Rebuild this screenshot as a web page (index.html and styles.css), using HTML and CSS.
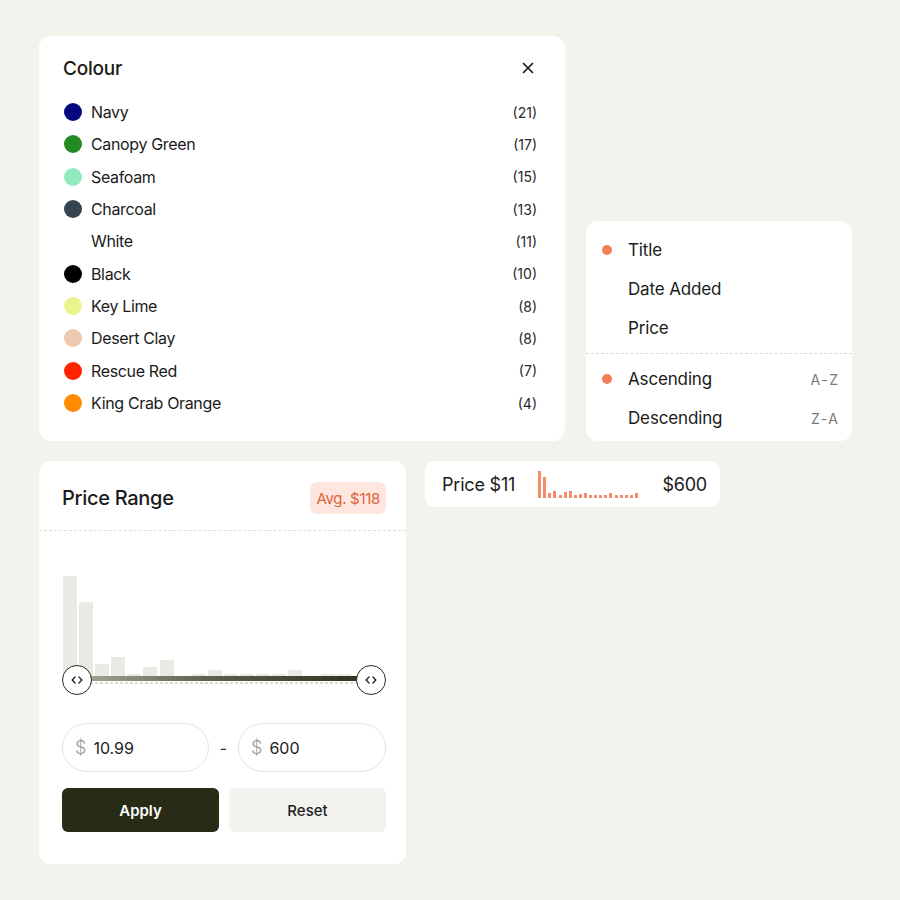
FILE: index.html
```html
<!DOCTYPE html>
<html lang="en">
<head>
<meta charset="utf-8">
<title>Filters</title>
<link rel="stylesheet" href="styles.css">
</head>
<body>
<main class="page">
  <div class="row row-top">
    <section class="card colour-card">
      <header class="colour-head">
        <h2 class="colour-title">Colour</h2>
        <button class="close" aria-label="Close">
          <svg width="12" height="12" viewBox="0 0 12 12"><path d="M1.5 1.5 L10.5 10.5 M10.5 1.5 L1.5 10.5" stroke="#1a1a1a" stroke-width="1.7" stroke-linecap="round"/></svg>
        </button>
      </header>
      <ul class="colour-list">
        <li class="colour-item"><span class="swatch" style="background:#06067f"></span><span class="colour-name">Navy</span><span class="count">(21)</span></li>
        <li class="colour-item"><span class="swatch" style="background:#228b22"></span><span class="colour-name">Canopy Green</span><span class="count">(17)</span></li>
        <li class="colour-item"><span class="swatch" style="background:#93e9be"></span><span class="colour-name">Seafoam</span><span class="count">(15)</span></li>
        <li class="colour-item"><span class="swatch" style="background:#36454f"></span><span class="colour-name">Charcoal</span><span class="count">(13)</span></li>
        <li class="colour-item"><span class="swatch" style="background:#ffffff"></span><span class="colour-name">White</span><span class="count">(11)</span></li>
        <li class="colour-item"><span class="swatch" style="background:#000000"></span><span class="colour-name">Black</span><span class="count">(10)</span></li>
        <li class="colour-item"><span class="swatch" style="background:#e8f48c"></span><span class="colour-name">Key Lime</span><span class="count">(8)</span></li>
        <li class="colour-item"><span class="swatch" style="background:#edc9af"></span><span class="colour-name">Desert Clay</span><span class="count">(8)</span></li>
        <li class="colour-item"><span class="swatch" style="background:#ff2400"></span><span class="colour-name">Rescue Red</span><span class="count">(7)</span></li>
        <li class="colour-item"><span class="swatch" style="background:#ff8c00"></span><span class="colour-name">King Crab Orange</span><span class="count">(4)</span></li>
      </ul>
    </section>

    <section class="card sort-card">
      <ul class="sort-list">
        <li class="sort-item"><span class="sort-dot on"></span><span class="sort-label">Title</span></li>
        <li class="sort-item"><span class="sort-dot"></span><span class="sort-label">Date Added</span></li>
        <li class="sort-item"><span class="sort-dot"></span><span class="sort-label">Price</span></li>
      </ul>
      <div class="sort-divider"></div>
      <ul class="sort-list">
        <li class="sort-item"><span class="sort-dot on"></span><span class="sort-label">Ascending</span><span class="sort-key">A-Z</span></li>
        <li class="sort-item"><span class="sort-dot"></span><span class="sort-label">Descending</span><span class="sort-key">Z-A</span></li>
      </ul>
    </section>
  </div>

  <div class="row row-bottom">
    <section class="card price-card">
      <header class="price-head">
        <h2 class="price-title">Price Range</h2>
        <span class="badge">Avg. $118</span>
      </header>
      <div class="price-body">
        <div class="chart">
          <div class="bars">
            <span class="bar" style="height:100px"></span>
            <span class="bar" style="height:74px"></span>
            <span class="bar" style="height:12px"></span>
            <span class="bar" style="height:19px"></span>
            <span class="bar" style="height:2px"></span>
            <span class="bar" style="height:9px"></span>
            <span class="bar" style="height:16px"></span>
            <span class="bar" style="height:0px"></span>
            <span class="bar" style="height:2px"></span>
            <span class="bar" style="height:6px"></span>
            <span class="bar" style="height:2px"></span>
            <span class="bar" style="height:2px"></span>
            <span class="bar" style="height:2px"></span>
            <span class="bar" style="height:2px"></span>
            <span class="bar" style="height:6px"></span>
            <span class="bar" style="height:0px"></span>
            <span class="bar" style="height:2px"></span>
            <span class="bar" style="height:2px"></span>
          </div>
          <div class="track"></div>
          <div class="dashes"></div>
          <span class="thumb thumb-left"><svg width="12" height="8" viewBox="0 0 12 8"><path d="M4 1 L1.2 4 L4 7 M8 1 L10.8 4 L8 7" fill="none" stroke="#1f2216" stroke-width="1.3" stroke-linecap="round" stroke-linejoin="round"/></svg></span>
          <span class="thumb thumb-right"><svg width="12" height="8" viewBox="0 0 12 8"><path d="M4 1 L1.2 4 L4 7 M8 1 L10.8 4 L8 7" fill="none" stroke="#1f2216" stroke-width="1.3" stroke-linecap="round" stroke-linejoin="round"/></svg></span>
        </div>
        <div class="inputs">
          <label class="field"><span class="cur">$</span><span class="val">10.99</span></label>
          <span class="sep">-</span>
          <label class="field"><span class="cur">$</span><span class="val">600</span></label>
        </div>
        <div class="actions">
          <button class="btn btn-apply">Apply</button>
          <button class="btn btn-reset">Reset</button>
        </div>
      </div>
    </section>

    <section class="card pill">
      <span class="pill-label">Price $11</span>
      <div class="mini">
        <span class="mbar" style="height:27px"></span>
        <span class="mbar" style="height:21px"></span>
        <span class="mbar" style="height:5px"></span>
        <span class="mbar" style="height:7px"></span>
        <span class="mbar" style="height:3px"></span>
        <span class="mbar" style="height:6px"></span>
        <span class="mbar" style="height:7px"></span>
        <span class="mbar" style="height:3px"></span>
        <span class="mbar" style="height:4px"></span>
        <span class="mbar" style="height:5px"></span>
        <span class="mbar" style="height:3px"></span>
        <span class="mbar" style="height:3px"></span>
        <span class="mbar" style="height:3px"></span>
        <span class="mbar" style="height:3px"></span>
        <span class="mbar" style="height:5px"></span>
        <span class="mbar" style="height:3px"></span>
        <span class="mbar" style="height:3px"></span>
        <span class="mbar" style="height:3px"></span>
        <span class="mbar" style="height:3px"></span>
        <span class="mbar" style="height:5px"></span>
      </div>
      <span class="pill-max">$600</span>
    </section>
  </div>
</main>
</body>
</html>
```
FILE: styles.css
```css
* { box-sizing: border-box; }
html, body { margin: 0; padding: 0; }
body {
  background: #f3f3ee;
  font-family: Inter, "Noto Sans", "Liberation Sans", sans-serif;
  color: #1b1b1b;
  width: 900px;
  height: 900px;
}
ul { list-style: none; margin: 0; padding: 0; }
h2 { margin: 0; }
button { font-family: inherit; border: 0; cursor: pointer; }

.page {
  padding: 36px 0 0 39px;
  display: flex;
  flex-direction: column;
  gap: 20px;
}
.row { display: flex; }
.row-top { align-items: flex-end; gap: 21px; }
.row-bottom { align-items: flex-start; gap: 19px; }

.card {
  background: #ffffff;
  border-radius: 12px;
}

/* Colour card */
.colour-card {
  width: 526px;
  height: 405px;
  padding: 20px 28px 0 24px;
}
.colour-head {
  display: flex;
  align-items: center;
  justify-content: space-between;
  height: 24px;
  margin-bottom: 16px;
}
.colour-title {
  font-size: 19px;
  font-weight: 550;
  letter-spacing: -0.2px;
  color: #1a1c12;
}
.close {
  background: none;
  padding: 0;
  width: 12px;
  height: 12px;
  margin-right: 3px;
  display: flex;
}
.colour-item {
  display: flex;
  align-items: center;
  height: 32.33px;
}
.swatch {
  width: 18px;
  height: 18px;
  border-radius: 50%;
  margin-left: 1px;
  margin-right: 9px;
  flex: none;
}
.colour-name {
  font-size: 16px;
  flex: 1;
  letter-spacing: -0.35px;
}
.count {
  font-size: 14px;
  color: #2a2a2a;
}

/* Sort card */
.sort-card {
  width: 266px;
  height: 220px;
  padding: 9.5px 0 4.5px;
}
.sort-item {
  display: flex;
  align-items: center;
  height: 39px;
  padding: 0 14px 0 16px;
}
.sort-dot {
  width: 10px;
  height: 10px;
  border-radius: 50%;
  margin-right: 16px;
  flex: none;
}
.sort-dot.on { background: #f08058; }
.sort-label {
  font-size: 17px;
  flex: 1;
  letter-spacing: -0.15px;
}
.sort-key {
  font-size: 14px;
  color: #7a7a7a;
  letter-spacing: 1.5px;
  margin-right: -1.5px;
}
.sort-divider {
  margin: 5.5px 0;
  border-top: 1px dashed #dcdcdc;
  height: 0;
}

/* Price card */
.price-card {
  width: 367px;
  height: 403px;
}
.price-head {
  display: flex;
  align-items: center;
  justify-content: space-between;
  padding: 21px 20px 16px 23px;
  border-bottom: 1px dashed #dedede;
}
.price-title {
  font-size: 20px;
  font-weight: 500;
  letter-spacing: -0.3px;
}
.badge {
  height: 32px;
  padding: 0 6px;
  display: flex;
  align-items: center;
  background: #fde6de;
  color: #e1623c;
  border-radius: 7px;
  font-size: 15px;
  letter-spacing: -0.3px;
}
.price-body {
  padding: 29px 20px 0 23px;
}
.chart {
  position: relative;
  width: 324px;
  padding-bottom: 11px;
}
.bars {
  height: 116px;
  display: flex;
  align-items: flex-end;
  gap: 2.1px;
  padding-left: 1px;
}
.bar {
  width: 14px;
  background: #ebe9e4;
  flex: none;
}
.track {
  height: 5px;
  margin: 0 15px;
  background: linear-gradient(to right, #a4a998, #5d6250 45%, #2c311d);
}
.dashes {
  height: 2px;
  margin: 1px 30px 0 28px;
  background: repeating-linear-gradient(to right, #dddbd6 0 3px, transparent 3px 5px);
}
.thumb {
  position: absolute;
  top: 105px;
  width: 30px;
  height: 30px;
  border-radius: 50%;
  background: #ffffff;
  border: 1.5px solid #25281b;
  display: flex;
  align-items: center;
  justify-content: center;
}
.thumb-left { left: 0; }
.thumb-right { right: 0; }

.inputs {
  display: flex;
  align-items: center;
  margin-top: 28px;
}
.field {
  width: 147px;
  height: 49px;
  border: 1px solid #e4e4e4;
  border-radius: 25px;
  display: flex;
  align-items: center;
  padding-left: 12px;
  font-size: 16px;
}
.field:last-child { width: 148px; }
.cur {
  color: #9a9a9a;
  font-size: 18px;
  margin-right: 7px;
  font-weight: 300;
}
.val { color: #222; }
.sep {
  width: 29px;
  text-align: center;
  font-size: 16px;
  color: #333;
}
.actions {
  display: flex;
  gap: 10px;
  margin-top: 16px;
}
.btn {
  width: 157px;
  height: 44px;
  border-radius: 6px;
  font-size: 15px;
}
.btn-apply {
  background: #282c17;
  color: #ffffff;
  font-weight: 600;
}
.btn-reset {
  background: #f3f2ee;
  color: #1d1d1d;
  font-weight: 500;
}

/* Pill */
.pill {
  width: 295px;
  height: 46px;
  border-radius: 10px;
  display: flex;
  align-items: center;
  padding: 0 13px 0 17px;
}
.pill-label {
  font-size: 18px;
  letter-spacing: -0.2px;
}
.mini {
  display: flex;
  align-items: flex-end;
  gap: 2.1px;
  height: 27px;
  margin-left: 23px;
}
.mbar {
  width: 3px;
  background: #f68d6a;
  flex: none;
}
.pill-max {
  margin-left: auto;
  font-size: 18px;
  letter-spacing: -0.2px;
}
```
